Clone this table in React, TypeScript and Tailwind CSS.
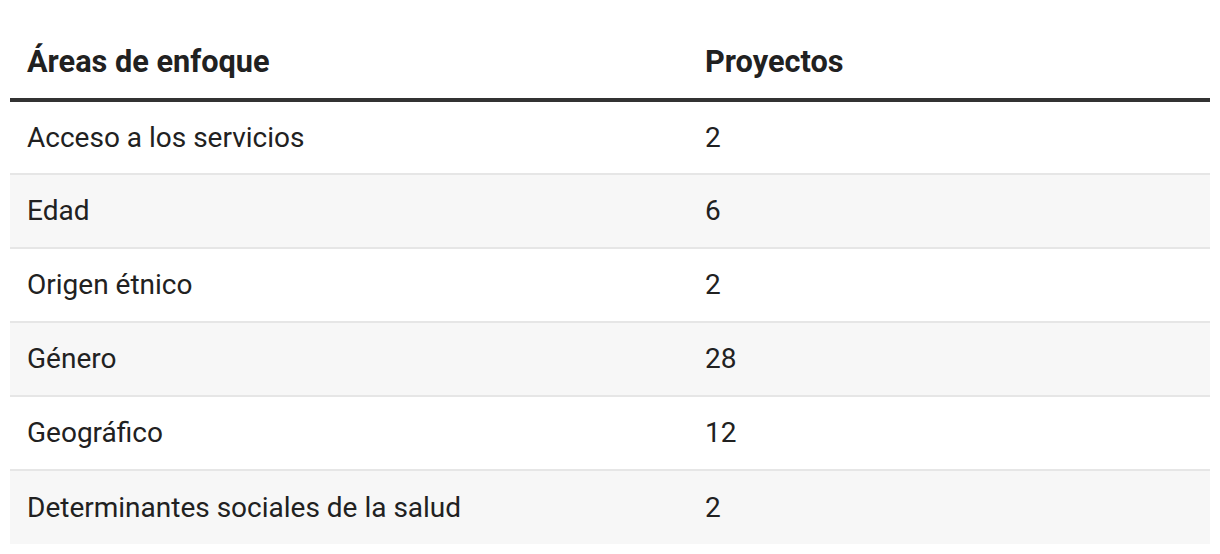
import React from 'react';

const rows = [
  { area: 'Acceso a los servicios', count: 2 },
  { area: 'Edad', count: 6 },
  { area: 'Origen étnico', count: 2 },
  { area: 'Género', count: 28 },
  { area: 'Geográfico', count: 12 },
  { area: 'Determinantes sociales de la salud', count: 2 },
];

export default function App() {
  return (
    <div className="bg-white px-[10px] pt-[26px] font-['Roboto',sans-serif] text-[#212121]">
      <table className="w-full border-collapse text-left text-[28px]">
        <thead>
          <tr className="border-b-4 border-[#333333]">
            <th className="h-[74px] w-[695px] pl-[17px] align-middle text-[30.7px] font-bold">Áreas de enfoque</th>
            <th className="h-[74px] align-middle text-[30.7px] font-bold">Proyectos</th>
          </tr>
        </thead>
        <tbody>
          {rows.map((row, i) => (
            <tr
              key={row.area}
              className={`border-t-2 border-[#e6e6e6] first:border-t-0 ${i % 2 === 1 ? 'bg-[#f7f7f7]' : 'bg-white'}`}
            >
              <td className="h-[74px] pl-[17px] align-middle font-normal">{row.area}</td>
              <td className="h-[74px] align-middle font-normal">{row.count}</td>
            </tr>
          ))}
        </tbody>
      </table>
    </div>
  );
}
